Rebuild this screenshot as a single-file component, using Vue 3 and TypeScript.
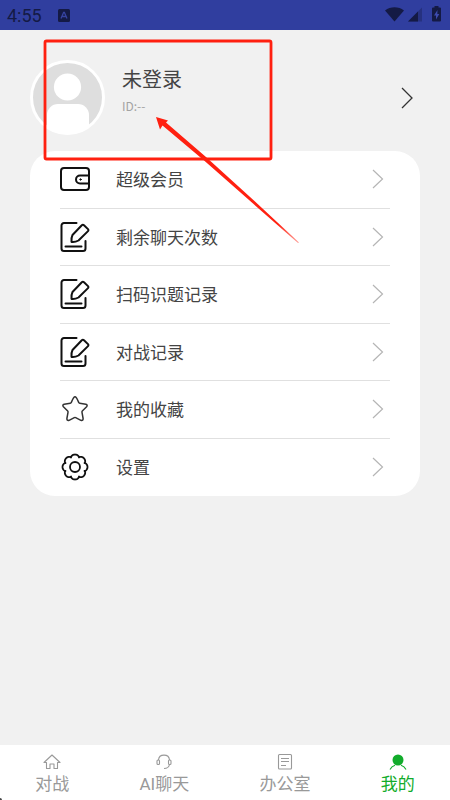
<script setup lang="ts">
import { ref } from 'vue'

type MenuIcon = 'wallet' | 'edit' | 'star' | 'gear'
type TabIcon = 'home' | 'headset' | 'doc' | 'user'

interface MenuEntry {
  label: string
  icon: MenuIcon
}

interface TabEntry {
  label: string
  icon: TabIcon
}

const menu: MenuEntry[] = [
  { label: '超级会员', icon: 'wallet' },
  { label: '剩余聊天次数', icon: 'edit' },
  { label: '扫码识题记录', icon: 'edit' },
  { label: '对战记录', icon: 'edit' },
  { label: '我的收藏', icon: 'star' },
  { label: '设置', icon: 'gear' },
]

const tabs: TabEntry[] = [
  { label: '对战', icon: 'home' },
  { label: 'AI聊天', icon: 'headset' },
  { label: '办公室', icon: 'doc' },
  { label: '我的', icon: 'user' },
]

const active = ref<TabIcon>('user')

// Scalloped outline of the settings gear: eight lobes around the centre.
function gearOutline(): string {
  const points: string[] = []
  for (let i = 0; i < 160; i++) {
    const a = (i / 160) * Math.PI * 2
    const r = 10.3 + 2.2 * Math.pow(Math.abs(Math.cos(a * 4)), 0.6)
    points.push(`${(15 + r * Math.sin(a)).toFixed(2)} ${(15 - r * Math.cos(a)).toFixed(2)}`)
  }
  return `M${points.join('L')}Z`
}
const gearPath = gearOutline()
</script>

<template>
  <div class="screen">
    <header class="status">
      <span class="clock">4:55</span>
      <svg class="badge" viewBox="0 0 12 13" aria-hidden="true">
        <rect width="12" height="13" rx="1.5" fill="#141a45" />
        <path d="M3 9.5L5.6 3.5h.8L9 9.5M4 7.5h4" fill="none" stroke="#3643a0" stroke-width="1.3" />
      </svg>
      <svg class="signals" viewBox="0 0 58 20" aria-hidden="true">
        <path d="M0 5.500C5.500 1.200 13.500 1.200 19 5.500L9.500 16.500Z" fill="#141a45" />
        <path d="M23 16.500L37 2.500V16.500Z" fill="#141a45" opacity=".35" />
        <path d="M23 16.500L33 6.500V16.500Z" fill="#141a45" />
        <path d="M49.500 1h4v1.500H55a1 1 0 0 1 1 1V15.500a1 1 0 0 1-1 1H48a1 1 0 0 1-1-1V3.500a1 1 0 0 1 1-1h1.500Z" fill="#141a45" />
        <path d="M52.500 5L49 10.500h2V14.500L54.300 9h-2Z" fill="#3d4bb0" />
      </svg>
    </header>

    <main class="content">
      <button class="profile" type="button">
        <svg class="avatar" viewBox="0 0 75 75" aria-hidden="true">
          <circle cx="37.5" cy="37.5" r="36" fill="#dedede" stroke="#fff" stroke-width="3" />
          <circle cx="37.5" cy="27" r="13.600" fill="#fff" />
          <path d="M17 67V55a11 11 0 0 1 11-11H48a11 11 0 0 1 11 11V67Q49 74.500 37.500 74.500T17 67Z" fill="#fff" />
        </svg>
        <span class="who">
          <span class="name">未登录</span>
          <span class="uid">ID:--</span>
        </span>
        <svg class="go" viewBox="0 0 12 22" aria-hidden="true">
          <path d="M1 1L11 11L1 21" fill="none" stroke="#333" stroke-width="1.3" />
        </svg>
      </button>

      <nav class="card">
        <button v-for="item in menu" :key="item.label" class="row" type="button">
          <svg class="icon" viewBox="0 0 30 30" fill="none" stroke="#111" stroke-width="2" stroke-linecap="round" stroke-linejoin="round" aria-hidden="true">
            <template v-if="item.icon === 'wallet'">
              <rect x="1" y="4" width="28" height="22" rx="3" />
              <path d="M29 11.500H20a4 4 0 0 0 0 8H29" />
              <circle cx="20.500" cy="15.500" r=".7" fill="#111" stroke-width="1" />
            </template>
            <template v-else-if="item.icon === 'edit'">
              <path d="M16.500 1H4a2.500 2.500 0 0 0-2.500 2.500V26.500A2.500 2.500 0 0 0 4 29H23a2.500 2.500 0 0 0 2.500-2.500V19" />
              <path d="M5.500 24.500H21.500" />
              <path d="M11.500 20Q11 16 12.500 13L21.800 3.200a1.600 1.600 0 0 1 2.200 0L28 7.100a1.400 1.400 0 0 1 0 2L18.500 18.500Q15 20.500 11.500 20Z" />
            </template>
            <path
              v-else-if="item.icon === 'star'"
              d="M13.700 3.700Q15 2 16.300 3.700Q17.500 5.500 18.800 8.600Q19 9.200 19.700 9.300L25.800 10.200Q28 10.900 26.600 12.700L22.300 17Q21.800 17.600 22 18.300L23.100 24.500Q23.200 27 20.900 26.300L15.700 23.600Q15 23.300 14.300 23.600L9.100 26.300Q6.800 27 6.900 24.500L8 18.300Q8.200 17.600 7.700 17L3.400 12.700Q2 10.900 4.200 10.200L10.300 9.300Q11 9.200 11.200 8.600Q12.500 5.500 13.700 3.700Z"
              stroke="#333"
              stroke-width="1.5"
            />
            <template v-else>
              <path :d="gearPath" stroke-width="1.8" />
              <circle cx="15" cy="15" r="5" stroke-width="1.8" />
            </template>
          </svg>
          <span class="label">{{ item.label }}</span>
          <svg class="chevron" viewBox="0 0 12 20" aria-hidden="true">
            <path d="M1 1L10.500 10L1 19" fill="none" stroke="#b5b5b5" stroke-width="1.2" />
          </svg>
        </button>
      </nav>
    </main>

    <nav class="tabs">
      <button
        v-for="tab in tabs"
        :key="tab.icon"
        type="button"
        class="tab"
        :class="{ on: tab.icon === active }"
        @click="active = tab.icon"
      >
        <svg class="glyph" viewBox="0 0 18 18" fill="none" stroke="currentColor" stroke-width="1.1" aria-hidden="true">
          <path v-if="tab.icon === 'home'" d="M1 9.500L9 2L17 9.500H14.500V15.500H11V11H7V15.500H3.500V9.500Z" stroke-linejoin="round" />
          <template v-else-if="tab.icon === 'headset'">
            <path d="M3.500 7C4 .5 14 .5 14.500 7M14.500 11.500C14 14 12 15.500 9 15.500" />
            <rect x="2" y="7" width="2.500" height="4.500" rx="1" />
            <rect x="13.500" y="7" width="2.500" height="4.500" rx="1" />
          </template>
          <template v-else-if="tab.icon === 'doc'">
            <rect x="2.500" y="1.500" width="13" height="14.500" rx="1" />
            <path d="M5 5.500H13M5 8.500H13M5 12.500H10" />
          </template>
          <template v-else>
            <circle cx="9" cy="7" r="5.500" fill="currentColor" stroke="none" />
            <path d="M1 16.500Q2.500 13.500 6 12.300M12 12.300Q15.500 13.500 17 16.500" />
          </template>
        </svg>
        <span>{{ tab.label }}</span>
      </button>
      <i class="corner"></i>
    </nav>

    <svg class="callout" viewBox="0 0 260 210" aria-hidden="true">
      <defs>
        <linearGradient id="tail" gradientUnits="userSpaceOnUse" x1="116" y1="79" x2="259" y2="205">
          <stop offset=".85" stop-color="#ff2010" />
          <stop offset="1" stop-color="#ff2010" stop-opacity=".4" />
        </linearGradient>
      </defs>
      <rect x="5" y="3" width="226" height="118" rx="1.500" fill="none" stroke="#ff2010" stroke-width="2.800" />
      <path d="M116 79L128 82.500L126 84.500L166 119L215 163.500L259 204.500L258 205L213 165.500L163.500 122L122.500 87.500L120 91.500Z" fill="url(#tail)" />
    </svg>
  </div>
</template>

<style>
body {
  margin: 0;
  background: #f1f1f1;
}
</style>

<style scoped>
.screen {
  position: relative;
  display: flex;
  flex-direction: column;
  min-height: 100vh;
  background: #f1f1f1;
  font-family: Roboto, "Noto Sans CJK SC", sans-serif;
  color: #444;
}

button {
  margin: 0;
  padding: 0;
  border: 0;
  background: none;
  font: inherit;
  color: inherit;
  text-align: left;
  cursor: pointer;
}

svg {
  display: block;
  flex: none;
}

.status {
  display: flex;
  align-items: center;
  height: 30px;
  padding: 0 7px;
  background: #303e9f;
  color: #141a45;
}

.clock {
  padding-top: 2px;
  font-size: 18px;
  line-height: 28px;
}

.badge {
  width: 12px;
  height: 13px;
  margin-left: 16px;
}

.signals {
  width: 58px;
  height: 20px;
  margin-left: auto;
}

.content {
  flex: 1;
  display: flex;
  flex-direction: column;
  padding: 30px;
  gap: 16px;
}

.profile {
  display: flex;
  align-items: center;
  gap: 17px;
  padding-right: 7px;
}

.avatar {
  width: 75px;
  height: 75px;
}

.who {
  flex: 1;
  display: flex;
  flex-direction: column;
  gap: 4px;
  padding-bottom: 16px;
}

.name {
  font-size: 20px;
  line-height: 28px;
}

.uid {
  font-family: "Noto Sans CJK SC", sans-serif;
  font-size: 12px;
  line-height: 16px;
  color: #a3a3a3;
}

.go {
  width: 12px;
  height: 22px;
}

.card {
  display: grid;
  grid-auto-rows: 1fr;
  min-height: 345px;
  padding: 0 30px;
  border-radius: 25px;
  background: #fff;
}

.row {
  display: flex;
  align-items: center;
  border-bottom: 1px solid #e0e0e0;
}

.row:last-child {
  border-bottom-color: transparent;
}

.icon {
  width: 30px;
  height: 30px;
}

.label {
  flex: 1;
  margin-left: 26px;
  padding-top: 2px;
  font-size: 17px;
  line-height: 24px;
}

.chevron {
  width: 12px;
  height: 20px;
  margin-right: 6px;
}

.tabs {
  position: relative;
  display: flex;
  justify-content: space-around;
  height: 55px;
  background: #fff;
}

.tab {
  display: flex;
  flex-direction: column;
  align-items: center;
  padding-top: 8px;
  color: #999;
  font-size: 17px;
  line-height: 26px;
}

.tab.on {
  color: #12ac2b;
}

.glyph {
  width: 18px;
  height: 18px;
}

.corner {
  position: absolute;
  left: 0;
  bottom: 0;
  width: 2px;
  height: 2px;
  border-top-right-radius: 2px;
  background: #444;
}

.callout {
  position: absolute;
  top: 38px;
  left: 40px;
  width: 260px;
  height: 210px;
  pointer-events: none;
}
</style>
